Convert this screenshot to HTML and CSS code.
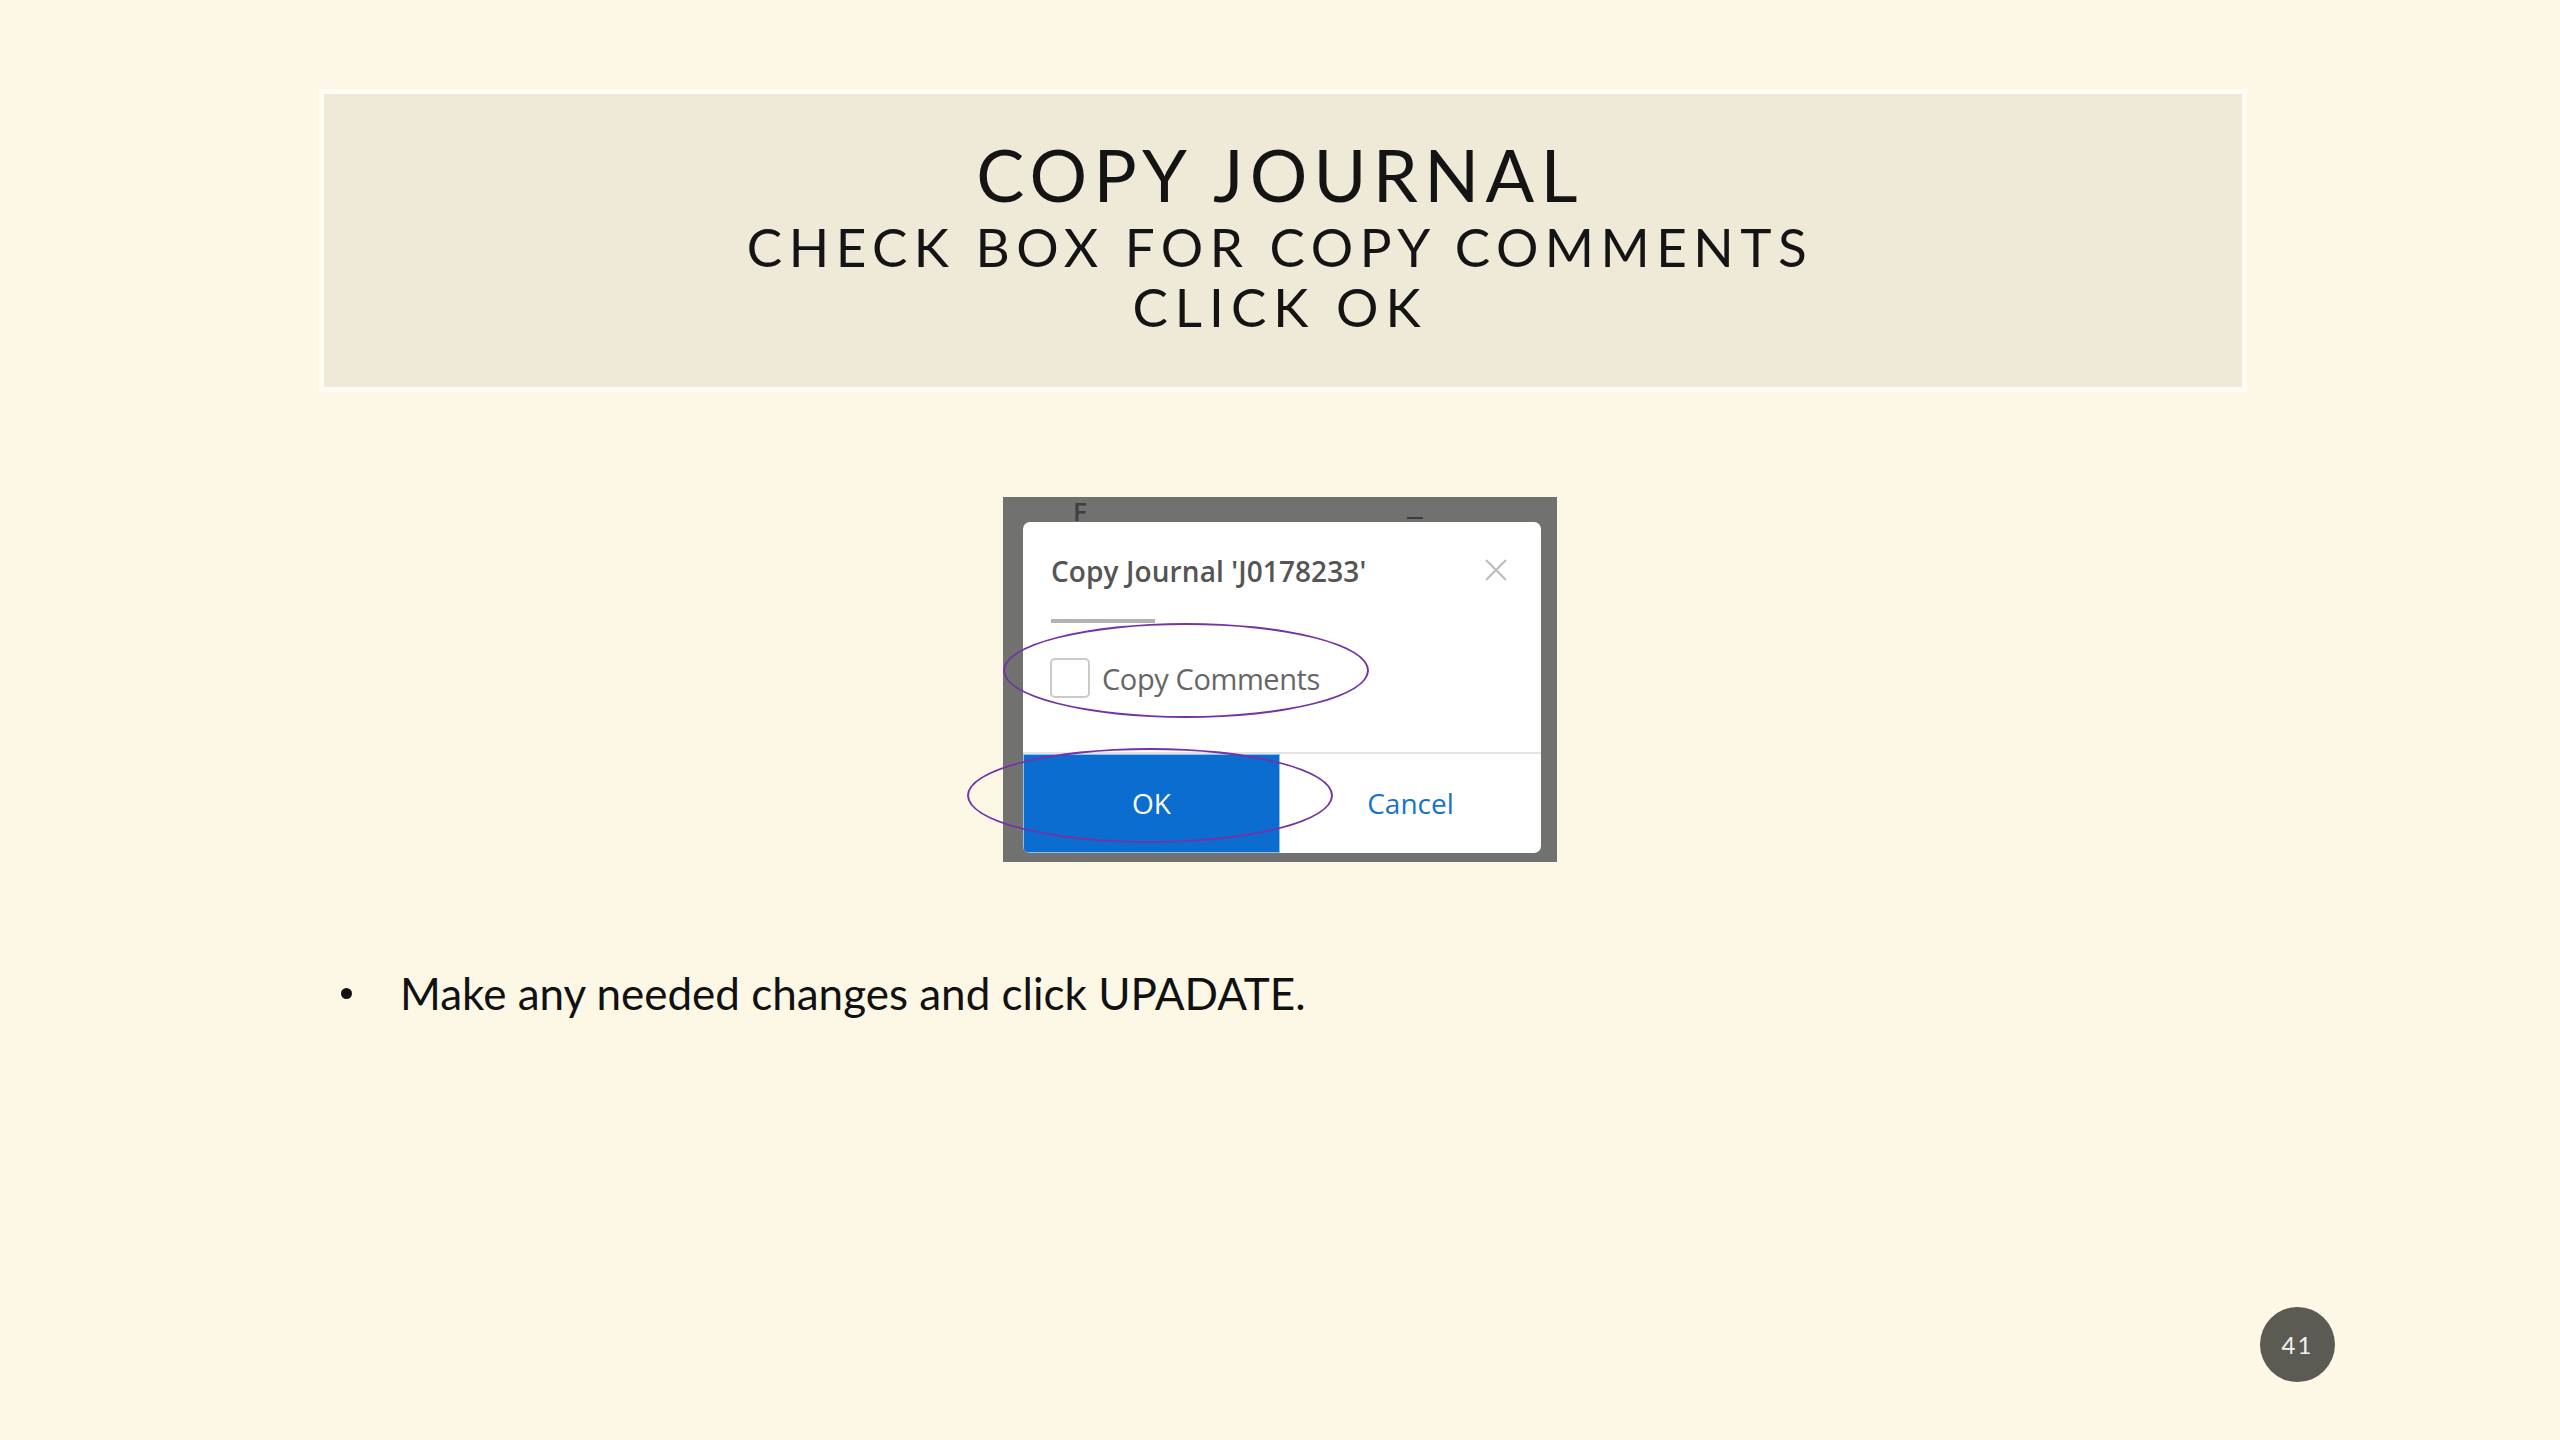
FILE: index.html
```html
<!DOCTYPE html>
<html>
<head>
    <title>Copy Journal</title>
    <link rel="stylesheet" href="styles.css">
</head>
<body>
    <div class="slide">
        <div class="title-box">
            <div class="title-main">COPY JOURNAL</div>
            <div class="title-sub">CHECK BOX FOR COPY COMMENTS</div>
            <div class="title-sub title-last">CLICK OK</div>
        </div>

        <div class="shot-row">
            <div class="shot">
                <span class="shot-f">F</span>
                <span class="shot-dash"></span>
                <div class="dialog">
                    <div class="dlg-head">
                        <span class="dlg-title">Copy Journal 'J0178233'</span>
                        <svg class="dlg-close" width="24" height="24" viewBox="0 0 24 24">
                            <path d="M2 2 L22 22 M22 2 L2 22" stroke="#bdbdbd" stroke-width="2.2" fill="none"/>
                        </svg>
                    </div>
                    <div class="dlg-bar"></div>
                    <div class="dlg-check">
                        <span class="checkbox"></span>
                        <span class="check-label">Copy Comments</span>
                    </div>
                    <div class="dlg-foot">
                        <div class="btn-ok">OK</div>
                        <div class="btn-cancel">Cancel</div>
                    </div>
                </div>
                <div class="mark mark-check"></div>
                <div class="mark mark-ok"></div>
            </div>
        </div>

        <div class="bullet-row">
            <span class="dot"></span>
            <span class="bullet-text">Make any needed changes and click UPADATE.</span>
        </div>

        <div class="page-num">41</div>
    </div>
</body>
</html>
```

FILE: styles.css
```css
body {
    margin: 0;
    background-color: #fdf7e5;
    font-family: Lato, "Open Sans", sans-serif;
}

.slide {
    position: relative;
    width: 2560px;
    height: 1440px;
    padding-top: 89px;
    box-sizing: border-box;
}

.title-box {
    margin-left: 319px;
    width: 1928px;
    height: 303px;
    padding-top: 44px;
    padding-right: 6px;
    box-sizing: border-box;
    background-color: #efead8;
    border: 5px solid #fffdf5;
    text-align: center;
    color: #141414;
}

.title-main {
    font-size: 72px;
    line-height: 72px;
    letter-spacing: 6.3px;
}

.title-sub {
    margin-top: 10px;
    font-size: 53px;
    line-height: 53px;
    letter-spacing: 6.5px;
}

.title-last {
    margin-top: 7px;
    letter-spacing: 7px;
}

.shot-row {
    display: flex;
    justify-content: center;
    margin-top: 105px;
}

.shot {
    position: relative;
    width: 554px;
    height: 365px;
    padding: 25px 16px 9px 20px;
    box-sizing: border-box;
    background-color: #717170;
    font-family: "Open Sans", sans-serif;
}

.shot-f {
    position: absolute;
    left: 70px;
    top: 1px;
    font-size: 26px;
    line-height: 26px;
    font-weight: 600;
    color: #3e3e3e;
}

.shot-dash {
    position: absolute;
    left: 404px;
    top: 20px;
    width: 16px;
    height: 2px;
    background-color: #3c3c3c;
}

.dialog {
    display: flex;
    flex-direction: column;
    height: 100%;
    background-color: #fff;
    border-radius: 7px;
    overflow: hidden;
}

.dlg-head {
    display: flex;
    justify-content: space-between;
    align-items: flex-start;
    padding: 35px 33px 0 28px;
}

.dlg-title {
    font-size: 28px;
    line-height: 28px;
    font-weight: 600;
    color: #555;
    letter-spacing: 0.1px;
}

.dlg-close {
    margin-top: 1px;
}

.dlg-bar {
    width: 104px;
    height: 4px;
    margin: 34px 0 0 28px;
    background-color: #b3b3b3;
}

.dlg-check {
    display: flex;
    align-items: center;
    gap: 12px;
    margin-top: 35px;
    padding-left: 27px;
}

.checkbox {
    width: 36px;
    height: 36px;
    border: 2px solid #cacaca;
    border-radius: 5px;
}

.check-label {
    font-size: 29px;
    line-height: 29px;
    color: #666;
    letter-spacing: -0.4px;
}

.dlg-foot {
    display: flex;
    height: 101px;
    margin-top: auto;
    border-top: 2px solid #e4e4e4;
    box-sizing: border-box;
}

.btn-ok {
    display: flex;
    align-items: center;
    justify-content: center;
    width: 257px;
    padding-bottom: 2px;
    background-color: #0a6dcf;
    border: 1px solid #8ec2ee;
    box-sizing: border-box;
    color: #fff;
    font-size: 28px;
}

.btn-cancel {
    display: flex;
    flex: 1;
    align-items: center;
    justify-content: center;
    padding-bottom: 2px;
    color: #1672cc;
    font-size: 28px;
}

.mark {
    position: absolute;
    width: 366px;
    height: 95px;
    border: 2px solid #7433a6;
    border-radius: 50%;
    box-sizing: border-box;
}

.mark-check {
    left: 0;
    top: 126px;
}

.mark-ok {
    left: -36px;
    top: 251px;
}

.bullet-row {
    display: flex;
    align-items: center;
    gap: 48px;
    margin: 108px 0 0 341px;
}

.dot {
    width: 11px;
    height: 11px;
    border-radius: 50%;
    background-color: #111;
}

.bullet-text {
    font-size: 44px;
    line-height: 46px;
    color: #111;
}

.page-num {
    position: absolute;
    right: 225px;
    bottom: 58px;
    width: 75px;
    height: 75px;
    border-radius: 50%;
    background-color: #5b5a53;
    color: #f2f2f2;
    font-size: 24px;
    line-height: 75px;
    letter-spacing: 2px;
    text-align: center;
}
```
